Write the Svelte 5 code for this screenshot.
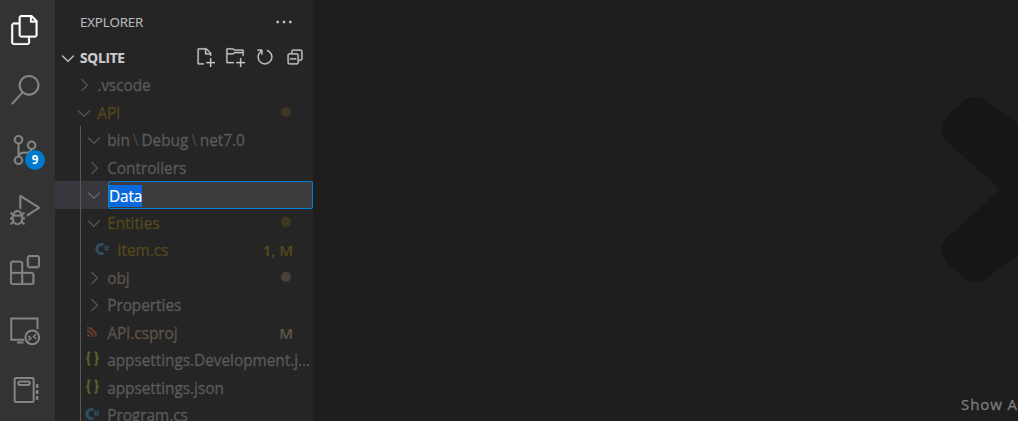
<script>
  const activities = [
    {
      name: 'Explorer',
      active: true,
      path: 'M17.5 0h-9L7 1.5V6H2.5L1 7.5v15.07L2.5 24h12.07L16 22.57V18h4.7l1.3-1.43V4.5L17.5 0zm0 2.12l2.38 2.38H17.5V2.12zm-3 20.38h-12v-15H7v9.07L8.5 18h6v4.5zm6-6h-12v-15H16V6h4.5v10.5z'
    },
    {
      name: 'Search',
      path: 'M15.25 0a8.25 8.25 0 0 0-6.18 13.72L1 22.88l1.12 1 8.05-9.12A8.251 8.251 0 1 0 15.25.01V0zm0 15a6.75 6.75 0 1 1 0-13.5 6.75 6.75 0 0 1 0 13.5z'
    },
    {
      name: 'Source Control',
      badge: 9,
      path: 'M21.007 8.222A3.738 3.738 0 0 0 15.045 5.2a3.737 3.737 0 0 0 1.156 6.583 2.988 2.988 0 0 1-2.668 1.67h-2.99a4.456 4.456 0 0 0-2.989 1.165V7.4a3.737 3.737 0 1 0-1.494 0v9.117a3.776 3.776 0 1 0 1.816.099 2.99 2.99 0 0 1 2.668-1.667h2.99a4.484 4.484 0 0 0 4.223-3.039 3.736 3.736 0 0 0 3.25-3.687zM4.565 3.738a2.242 2.242 0 1 1 4.484 0 2.242 2.242 0 0 1-4.484 0zm4.484 16.441a2.242 2.242 0 1 1-4.484 0 2.242 2.242 0 0 1 4.484 0zm8.221-9.715a2.242 2.242 0 1 1 0-4.485 2.242 2.242 0 0 1 0 4.485z'
    },
    {
      name: 'Run and Debug',
      path: 'M10.94 13.5l-1.32 1.32a3.73 3.73 0 0 0-7.24 0L1.06 13.5 0 14.56l1.72 1.72-.22.22V18H0v1.5h1.5v.08c.077.489.214.966.41 1.42L0 22.94 1.06 24l1.65-1.65A4.308 4.308 0 0 0 6 24a4.31 4.31 0 0 0 3.29-1.65L10.94 24 12 22.94 10.09 21c.198-.464.336-.951.41-1.45v-.1H12V18h-1.5v-1.5l-.22-.22L12 14.56l-1.06-1.06zM6 13.5a2.25 2.25 0 0 1 2.25 2.25h-4.5A2.25 2.25 0 0 1 6 13.5zm3 6a3.33 3.33 0 0 1-3 3 3.33 3.33 0 0 1-3-3v-2.25h6v2.25zm14.76-9.9v1.26L13.5 17.37V15.6l8.5-5.37L9 2v9.46a5.07 5.07 0 0 0-1.5-.72V.63L8.64 0l15.12 9.6z'
    },
    {
      name: 'Extensions',
      path: 'M13.5 1.5L15 0h7.5L24 1.5V9l-1.5 1.5H15L13.5 9V1.5zm1.5 0V9h7.5V1.5H15zM0 15V6l1.5-1.5H9L10.5 6v7.5H18l1.5 1.5v7.5L18 24H1.5L0 22.5V15zm9-1.5V6H1.5v7.5H9zM9 15H1.5v7.5H9V15zm1.5 7.5H18V15h-7.5v7.5z'
    },
    { name: 'Remote Explorer', kind: 'remote' },
    { name: 'Notebook', kind: 'notebook' }
  ];

  const actions = [
    {
      name: 'New File',
      path: 'M9.5 1.1l3.4 3.5.1.4v2h-1V6H8V2H3v11h4v1H2.5l-.5-.5v-12l.5-.5h6.7l.3.1zM9 2v3h2.9L9 2zm4 14h-1v-3H9v-1h3V9h1v3h3v1h-3v3z'
    },
    {
      name: 'New Folder',
      path: 'M14.5 2H7.71l-.85-.85L6.51 1h-5l-.5.5v11l.5.5H7v-1H1.99V6h4.49l.35-.15.86-.86H14v1.5l-.001.51h1.011V2.5L14.5 2zm-.51 2h-6.5l-.35.15-.86.86H2v-3h4.29l.85.85.36.15H14l-.01.99zM13 16h-1v-3H9v-1h3V9h1v3h3v1h-3v3z'
    },
    {
      name: 'Refresh',
      path: 'M4.681 3H2V2h3.5l.5.5V6H5V4a5 5 0 1 0 4.53-.761l.302-.954A6 6 0 1 1 4.681 3z'
    },
    {
      name: 'Collapse',
      path: 'M9 9H4v1h5V9zM5 3l1-1h7l1 1v7l-1 1h-2v2l-1 1H3l-1-1V6l1-1h2V3zm1 2h4l1 1v4h2V3H6v2zm4 1H3v7h7V6z'
    }
  ];

  const chevrons = {
    open: 'M7.976 10.072l4.357-4.357.62.618L8.284 11h-.618L3 6.333l.619-.618 4.357 4.357z',
    closed: 'M10.072 8.024L5.715 3.667l.618-.62L11 7.716v.618L6.333 13l-.618-.619 4.357-4.357z'
  };

  const rows = [
    { label: '.vscode', level: 0, icon: 'closed' },
    { label: 'API', level: 0, icon: 'open', tone: 'warn', dot: true },
    { parts: ['bin', 'Debug', 'net7.0'], level: 1, icon: 'open' },
    { label: 'Controllers', level: 1, icon: 'closed' },
    { label: 'Data', level: 1, icon: 'open', editing: true },
    { label: 'Entities', level: 1, icon: 'open', tone: 'warn', dot: true },
    { label: 'Item.cs', level: 2, icon: 'cs', tone: 'warn', status: '1, M' },
    { label: 'obj', level: 1, icon: 'closed', tone: 'modified', dot: true },
    { label: 'Properties', level: 1, icon: 'closed' },
    { label: 'API.csproj', level: 1, icon: 'rss', tone: 'modified', status: 'M' },
    { label: 'appsettings.Development.json', level: 1, icon: 'json' },
    { label: 'appsettings.json', level: 1, icon: 'json' },
    { label: 'Program.cs', level: 1, icon: 'cs' }
  ];
</script>

<div class="workbench">
  <nav class="activity-bar">
    {#each activities as item}
      <div class="activity" class:active={item.active} aria-label={item.name}>
        <svg viewBox="0 0 24 24">
          {#if item.kind === 'remote'}
            <g class="line">
              <path d="M11.3 19.7H1V2.7h21v8.6M5.6 21.9h5.2" />
              <circle cx="17.8" cy="17.9" r="5.5" />
              <path class="thin" d="M14.6 16.7l2.1 1.8-2.1 1.8M20.9 15.4l-2.1 1.8 2.1 1.8" />
            </g>
          {:else if item.kind === 'notebook'}
            <g class="line">
              <rect x="3.7" y="2.3" width="15.2" height="19.2" rx="1" />
              <rect x="6.7" y="5.1" width="9.2" height="2.8" rx="1.4" />
              <path d="M21.7 7.2v3.1M21.7 12v3.1M21.7 16.7v3.1" class="tabs" />
            </g>
          {:else}
            <path d={item.path} />
          {/if}
        </svg>
        {#if item.badge}
          <span class="badge">{item.badge}</span>
        {/if}
      </div>
    {/each}
  </nav>

  <aside class="sidebar">
    <header class="title">
      <span>EXPLORER</span>
      <svg class="icon" viewBox="0 0 16 16">
        <path d="M4 8a1 1 0 1 1-2 0 1 1 0 0 1 2 0zm5 0a1 1 0 1 1-2 0 1 1 0 0 1 2 0zm5 0a1 1 0 1 1-2 0 1 1 0 0 1 2 0z" />
      </svg>
    </header>

    <div class="section">
      <svg class="icon" viewBox="0 0 16 16"><path d={chevrons.open} /></svg>
      <h3>SQLITE</h3>
      <div class="actions">
        {#each actions as action}
          <svg class="icon" viewBox="0 0 16 16" aria-label={action.name}>
            <path d={action.path} />
          </svg>
        {/each}
      </div>
    </div>

    <div class="tree">
      {#each rows as row}
        <div class="row level-{row.level} {row.tone ?? ''}" class:editing={row.editing}>
          {#if row.level > 0}
            <span class="guide"></span>
          {/if}

          {#if row.icon === 'cs'}
            <svg class="icon file cs" viewBox="0 0 20 20">
              <path class="c" d="M9.4 5.2A4.1 4.6 0 1 0 9.4 12.8" />
              <path class="sharp" d="M11.9 5.2l-.7 6M14 5.2l-.7 6M10.2 7.1h5.2M9.9 9.3h5.2" />
            </svg>
          {:else if row.icon === 'rss'}
            <svg class="icon file rss" viewBox="0 0 20 20">
              <circle cx="4.5" cy="12.6" r="1.5" />
              <path d="M3.2 8.2a5.4 5.4 0 0 1 5.6 5.6M3.2 4.8a8.8 8.8 0 0 1 8.9 9" />
            </svg>
          {:else if row.icon === 'json'}
            <svg class="icon file json" viewBox="0 0 20 20">
              <path d="M6.4 2.4H5.8Q4.4 2.4 4.4 3.9V6.7Q4.4 8.4 2.4 8.6 4.4 8.8 4.4 10.5V13.3Q4.4 14.8 5.8 14.8H6.4M10.6 2.4H11.2Q12.6 2.4 12.6 3.9V6.7Q12.6 8.4 14.6 8.6 12.6 8.8 12.6 10.5V13.3Q12.6 14.8 11.2 14.8H10.6" />
            </svg>
          {:else}
            <svg class="icon" viewBox="0 0 16 16"><path d={chevrons[row.icon]} /></svg>
          {/if}

          {#if row.editing}
            <div class="input"><span>{row.label}</span></div>
          {:else if row.parts}
            <span class="label">
              {#each row.parts as part, i}{#if i > 0}<i>\</i>{/if}{part}{/each}
            </span>
          {:else}
            <span class="label">{row.label}</span>
          {/if}

          {#if row.status}
            <span class="status">{row.status}</span>
          {:else if row.dot}
            <span class="dot"></span>
          {/if}
        </div>
      {/each}
    </div>
  </aside>

  <main class="editor">
    <svg class="watermark" viewBox="0 0 78 190">
      <path d="M78 28.5L46 5.5Q35-2 24.5 5.5L6 22Q-3 33.5 6 45.5L60 94.5 6 143.5Q-3 155.5 6 167L24.5 183.5Q35 191 46 183.5L78 160.5z" />
    </svg>
    <p class="hint">Show All Commands</p>
  </main>
</div>

<style>
  :global(body) {
    margin: 0;
    background: #1e1e1e;
  }

  .workbench {
    display: flex;
    width: 1018px;
    height: 421px;
    overflow: hidden;
    font-family: 'Open Sans', 'Noto Sans', sans-serif;
    font-size: 15.4px;
    color: #ccc;
  }

  svg {
    display: block;
    flex: none;
    fill: currentColor;
  }

  .icon {
    width: 20px;
    height: 20px;
  }

  .icon:not(.file) path {
    stroke: currentColor;
    stroke-width: 0.2;
  }

  /* Activity bar */
  .activity-bar {
    flex: none;
    width: 55px;
    background: #333;
  }

  .activity {
    position: relative;
    display: flex;
    align-items: center;
    height: 60px;
    padding-left: 10px;
    color: #858585;
  }

  .activity.active {
    color: #fff;
  }

  .activity svg {
    width: 30px;
    height: 30px;
  }

  .activity svg > path {
    stroke: currentColor;
    stroke-width: 0.2;
  }

  .line {
    fill: none;
    stroke: currentColor;
    stroke-width: 1.6;
  }

  .thin {
    stroke-width: 1.2;
  }

  .tabs {
    stroke-width: 2;
  }

  .badge {
    position: absolute;
    left: 25px;
    top: 30px;
    width: 20px;
    height: 20px;
    border-radius: 50%;
    background: #007acc;
    color: #fff;
    font-size: 11.5px;
    font-weight: 700;
    line-height: 20px;
    text-align: center;
  }

  /* Sidebar */
  .sidebar {
    flex: none;
    width: 258px;
    overflow: hidden;
    background: #252526;
  }

  .title {
    display: flex;
    align-items: center;
    justify-content: space-between;
    height: 43.75px;
    padding: 0 19px 0 25px;
    font-size: 13.4px;
    letter-spacing: -0.2px;
    color: #bbb;
  }

  .title span {
    -webkit-text-stroke: 0.15px;
  }

  .title svg {
    color: #c5c5c5;
  }

  .section {
    display: flex;
    align-items: center;
    height: 27.5px;
    padding-left: 2.5px;
  }

  .section h3 {
    margin: 0 0 0 2.5px;
    font-size: 13.6px;
    font-weight: 700;
    letter-spacing: -0.2px;
    -webkit-text-stroke: 0.2px;
  }

  .actions {
    display: flex;
    gap: 10px;
    margin-left: auto;
    padding: 0 8px 1px 0;
    color: #c5c5c5;
  }

  .row {
    display: flex;
    align-items: center;
    height: 27.5px;
    padding-right: 20px;
    white-space: nowrap;
    color: #5a5a5a;
  }

  .row.level-0 {
    padding-left: 19px;
  }

  .guide {
    flex: none;
    width: 1px;
    height: 100%;
    margin: 0 3px 0 25px;
    background: #585858;
  }

  .level-2 .guide {
    margin-right: 13px;
  }

  .label {
    flex: 1;
    min-width: 0;
    margin-left: 3.2px;
    padding-top: 1px;
    overflow: hidden;
    text-overflow: ellipsis;
    letter-spacing: -0.04px;
    -webkit-text-stroke: 0.3px;
  }

  .label i {
    margin: 0 3px;
    font-style: normal;
    opacity: 0.6;
  }

  .row:not(:has(.status, .dot)) {
    padding-right: 0;
  }

  .warn .label,
  .warn .status {
    color: #54481a;
  }

  .modified .label,
  .modified .status {
    color: #5f5447;
  }

  .status {
    font-size: 15px;
    font-weight: 600;
    -webkit-text-stroke: 0.2px;
  }

  .dot {
    width: 10px;
    height: 10px;
    margin: 0 2px 1px 0;
    border-radius: 50%;
    background: #3f3821;
  }

  .modified .dot {
    background: #46413a;
  }

  .row.editing {
    padding-right: 0;
    background: #37373d;
  }

  .editing .icon {
    color: #6a6a6c;
  }

  .row.editing .input {
    flex: 1;
    box-sizing: border-box;
    display: flex;
    align-items: center;
    height: 28px;
    margin-left: 4px;
    padding-top: 1px;
    border: 1px solid #007fd4;
    border-radius: 2px;
    background: #3c3c3c;
    color: #fff;
  }

  .input span {
    height: 22px;
    line-height: 24px;
    letter-spacing: -0.15px;
    background: #0a6adc;
    -webkit-text-stroke: 0.2px;
  }

  /* File type icons */
  .file {
    stroke: currentColor;
  }

  .cs {
    color: #2e4f60;
    fill: none;
  }

  .cs .c {
    stroke-width: 3;
  }

  .cs .sharp {
    stroke-width: 1;
  }

  .rss {
    color: #6b3d28;
  }

  .rss circle {
    stroke: none;
  }

  .rss path {
    fill: none;
    stroke-width: 2;
  }

  .json {
    color: #5b5d2b;
    fill: none;
    stroke-width: 2.1;
  }

  /* Editor */
  .editor {
    flex: 1;
    display: flex;
    flex-direction: column;
    align-items: flex-end;
    min-width: 0;
    padding-top: 95px;
    box-sizing: border-box;
    overflow: hidden;
    background: #1e1e1e;
  }

  .watermark {
    width: 78px;
    height: 190px;
    color: #161616;
  }

  .hint {
    width: 57px;
    margin: 108px 0 0;
    font-size: 15px;
    line-height: 22px;
    letter-spacing: 0.9px;
    white-space: nowrap;
    color: #7c7c7c;
    -webkit-text-stroke: 0.3px;
  }
</style>
